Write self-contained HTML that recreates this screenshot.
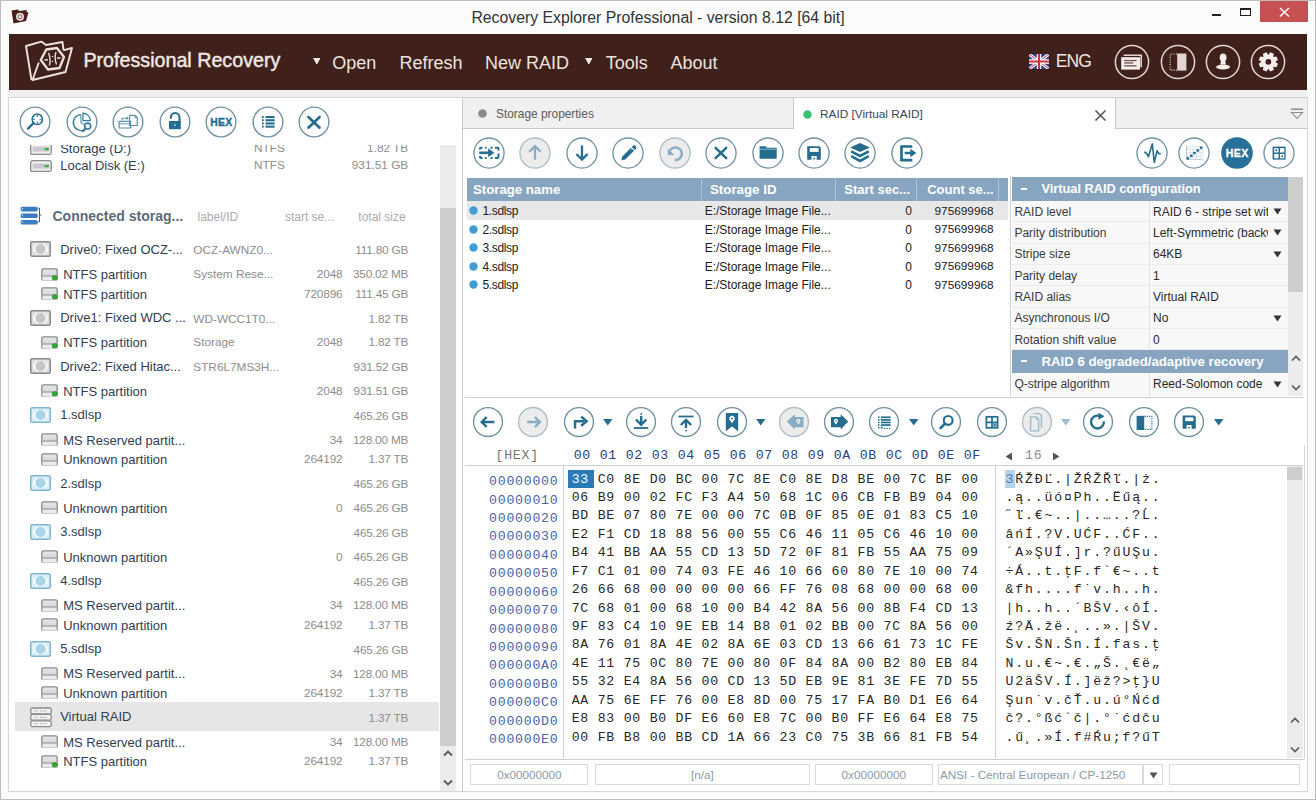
<!DOCTYPE html><html><head><meta charset="utf-8"><style>
html,body{margin:0;padding:0}
body{width:1316px;height:800px;position:relative;overflow:hidden;background:#fbfbfb;font-family:"Liberation Sans", sans-serif}
.a{position:absolute;display:block}
.t{position:absolute;white-space:pre;line-height:1}
</style></head><body>
<div class="a" style="left:0px;top:0px;width:1316px;height:800px;box-sizing:border-box;border:1px solid #bdbdbd;background:transparent"></div>
<svg class="a" style="left:10px;top:8px;" width="20" height="17" viewBox="0 0 20 17"><path d="M1.5 2.5 L8 1.5 L9 3 L17 2 L16.5 4 L18.5 4.5 L16 13 L3.5 15.5 Z" fill="#4a1f1c"/><circle cx="10" cy="8.7" r="4" fill="#e8dcdc"/><circle cx="10" cy="8.7" r="2" fill="none" stroke="#6a4a48" stroke-width="0.8"/></svg>
<div class="t" style="top:10.02px;font-size:15.8px;color:#333333;left:658px;transform:translateX(-50%);">Recovery Explorer Professional - version 8.12 [64 bit]</div>
<div class="a" style="left:1212px;top:14px;width:9px;height:2px;background:#222"></div>
<div class="a" style="left:1240px;top:8px;width:11px;height:8px;box-sizing:border-box;border:1px solid #222;border-top-width:2px"></div>
<div class="a" style="left:1260px;top:1px;width:48px;height:21px;background:#c75050"></div>
<svg class="a" style="left:1278px;top:6px;" width="12" height="12" viewBox="0 0 12 12"><path d="M2 2 L11 10.5 M11 2 L2 10.5" stroke="#fff" stroke-width="1.4"/></svg>
<div class="a" style="left:9px;top:34px;width:1298px;height:55.5px;background:#3f201b"></div>
<svg class="a" style="left:20px;top:36px;" width="60" height="50" viewBox="0 0 60 50"><g fill="none" stroke="#eee2de" stroke-width="1.9" stroke-linejoin="round"><path d="M11.5 44 L6 10 L21.3 5.6 L26 9 L42.5 6 L43.5 14"/><path d="M43.2 14.3 L52 12 L45.5 36 L12.5 44 L18.8 26.5"/><path d="M20.8 24 L26.3 13.5 L37 12 L44 21 L39.5 32 L28 33.5 Z" stroke-width="2.3"/><path d="M28.5 17 Q31 23 29.5 29.5 M36 16 Q34 22 36.5 28.5 M24.5 24 L28 23.7 M37 22.2 L40.5 21.8 M32.5 20 L32.5 21 M32.5 25 L32.5 26" stroke-width="1.4"/></g></svg>
<div class="t" style="top:51.32px;font-size:19.7px;color:#f1e7e3;left:83.4px;-webkit-text-stroke:0.45px #f1e7e3;">Professional Recovery</div>
<svg class="a" style="left:312.9px;top:57.5px;" width="7.6" height="6.8" viewBox="0 0 7.6 6.8"><path d="M0 0 L7.6 0 L3.8 6.8 Z" fill="#f1e7e3"/></svg>
<div class="t" style="top:53.66px;font-size:18px;color:#ede3df;left:332.2px;">Open</div>
<div class="t" style="top:53.66px;font-size:18px;color:#ede3df;left:399.5px;">Refresh</div>
<div class="t" style="top:53.66px;font-size:18px;color:#ede3df;left:485px;">New RAID</div>
<svg class="a" style="left:584.8px;top:57.5px;" width="7.6" height="6.8" viewBox="0 0 7.6 6.8"><path d="M0 0 L7.6 0 L3.8 6.8 Z" fill="#f1e7e3"/></svg>
<div class="t" style="top:53.66px;font-size:18px;color:#ede3df;left:605.8px;">Tools</div>
<div class="t" style="top:53.66px;font-size:18px;color:#ede3df;left:670.5px;">About</div>
<svg class="a" style="left:1029px;top:54px;" width="20" height="15" viewBox="0 0 20 15"><rect width="20" height="15" fill="#2b3f8c"/><path d="M0 0 L20 15 M20 0 L0 15" stroke="#fff" stroke-width="3"/><path d="M0 0 L20 15 M20 0 L0 15" stroke="#c8323c" stroke-width="1"/><path d="M10 0 V15 M0 7.5 H20" stroke="#fff" stroke-width="4.5"/><path d="M10 0 V15 M0 7.5 H20" stroke="#c8323c" stroke-width="2.2"/></svg>
<div class="t" style="top:52.98px;font-size:17.5px;color:#efe5e1;letter-spacing:-0.9px;left:1055.7px;">ENG</div>
<svg class="a" style="left:1114.1px;top:43.5px;" width="36" height="36" viewBox="0 0 36 36"><circle cx="18" cy="18" r="16.6" fill="none" stroke="#e3d5d1" stroke-width="1.5"/></svg>
<svg class="a" style="left:1159.5px;top:43.5px;" width="36" height="36" viewBox="0 0 36 36"><circle cx="18" cy="18" r="16.6" fill="none" stroke="#e3d5d1" stroke-width="1.5"/></svg>
<svg class="a" style="left:1204.75px;top:43.5px;" width="36" height="36" viewBox="0 0 36 36"><circle cx="18" cy="18" r="16.6" fill="none" stroke="#e3d5d1" stroke-width="1.5"/></svg>
<svg class="a" style="left:1250.4px;top:43.5px;" width="36" height="36" viewBox="0 0 36 36"><circle cx="18" cy="18" r="16.6" fill="none" stroke="#e3d5d1" stroke-width="1.5"/></svg>
<svg class="a" style="left:1114.1px;top:43.5px;" width="36" height="36" viewBox="0 0 36 36"><path d="M9.6 10.5 H28 V23.2 H26.4 V12.1 H9.6 Z" fill="#e3d5d1"/><rect x="7.2" y="13.2" width="18.8" height="12.4" fill="#f4eeec"/><g fill="#6a5450"><rect x="10.2" y="15.9" width="12.4" height="1.3"/><rect x="10.2" y="18.3" width="9" height="1.3"/><rect x="10.2" y="21.2" width="12.4" height="1.3"/></g></svg>
<svg class="a" style="left:1159.5px;top:43.5px;" width="36" height="36" viewBox="0 0 36 36"><rect x="17.2" y="9.5" width="9.2" height="17.1" fill="#e3d5d1"/><path d="M17 10 H10.2 V26.1 H17" stroke="#e3d5d1" stroke-width="1.1" stroke-dasharray="1.1 1.3" fill="none"/></svg>
<svg class="a" style="left:1204.75px;top:43.5px;" width="36" height="36" viewBox="0 0 36 36"><g fill="#f4eeec"><ellipse cx="18.1" cy="13.6" rx="3.4" ry="4.2"/><path d="M16 17 L20.2 17 L21 20.5 H15.2 Z"/><ellipse cx="18.1" cy="23" rx="6.9" ry="2.6"/></g></svg>
<svg class="a" style="left:1250.4px;top:43.5px;" width="36" height="36" viewBox="0 0 36 36"><polygon points="27.97,19.73 26.48,23.32 23.60,22.77 23.27,23.10 23.82,25.98 20.23,27.47 18.59,25.05 18.11,25.05 16.47,27.47 12.88,25.98 13.43,23.10 13.10,22.77 10.22,23.32 8.73,19.73 11.15,18.09 11.15,17.61 8.73,15.97 10.22,12.38 13.10,12.93 13.43,12.60 12.88,9.72 16.47,8.23 18.11,10.65 18.59,10.65 20.23,8.23 23.82,9.72 23.27,12.60 23.60,12.93 26.48,12.38 27.97,15.97 25.55,17.61 25.55,18.09" fill="#f4eeec"/><circle cx="18.35" cy="17.85" r="2.9" fill="#3f201b"/></svg>
<div class="a" style="left:9px;top:89.5px;width:1298px;height:8px;background:#f0f0f0"></div>
<div class="a" style="left:8px;top:97px;width:455px;height:695px;box-sizing:border-box;border:1px solid #d7d7d7;border-right:none;background:#fff"></div>
<div class="a" style="left:462px;top:97px;width:1px;height:695px;background:#c9c9c9"></div>
<svg class="a" style="left:17.200000000000003px;top:103.7px;" width="36" height="36" viewBox="0 0 36 36"><circle cx="18" cy="18" r="14.85" fill="#fff" stroke="#6f91a4" stroke-width="1.35"/><g stroke="#246d8f" fill="none"><circle cx="20.3" cy="15.3" r="5.2" stroke-width="1.5"/><path d="M16.6 19 L11 24.6" stroke-width="2.4" stroke-linecap="round"/><path d="M20.3 11 V13 M20.3 17.6 V19.6 M16 15.3 H18 M22.6 15.3 H24.6" stroke-width="1"/></g></svg>
<svg class="a" style="left:63.7px;top:103.7px;" width="36" height="36" viewBox="0 0 36 36"><circle cx="18" cy="18" r="14.85" fill="#fff" stroke="#6f91a4" stroke-width="1.35"/><g fill="none" stroke="#246d8f" opacity="0.9"><path d="M17 10.6 A8 8 0 1 0 21.2 25.6" stroke-width="1.4"/><path d="M19 9.2 V16.7 H26.3 A7.3 7.5 0 0 0 19 9.2 Z" stroke-width="1.2"/><path d="M17 11 V18.5 L20.5 21" stroke-width="1.8" opacity="0.55"/><circle cx="23.7" cy="22.1" r="3" stroke-width="1.6"/><path d="M21.6 24.3 L18.8 27.3" stroke-width="2" stroke-linecap="round"/></g></svg>
<svg class="a" style="left:110.19999999999999px;top:103.7px;" width="36" height="36" viewBox="0 0 36 36"><circle cx="18" cy="18" r="14.85" fill="#fff" stroke="#6f91a4" stroke-width="1.35"/><g fill="none" stroke="#246d8f" stroke-width="1.2" opacity="0.75"><path d="M19.6 11.3 H25 L27.3 13.6 V21.5 H19.6 Z"/><path d="M25 11.3 V13.6 H27.3" stroke-width="0.9"/><path d="M9.1 17.3 H20.6 V24 H9.1 Z"/><path d="M9.1 19.8 H20.6" stroke-width="0.9"/><path d="M12 16.5 V14.2 H17.5" stroke-width="1.1"/><path d="M16.5 12.3 L19 14.2 L16.5 16.1 Z" fill="#246d8f" stroke="none"/></g></svg>
<svg class="a" style="left:156.7px;top:103.7px;" width="36" height="36" viewBox="0 0 36 36"><circle cx="18" cy="18" r="14.85" fill="#fff" stroke="#6f91a4" stroke-width="1.35"/><g><path d="M13.9 14.8 V13.3 A4.3 4.3 0 0 1 22.5 13.3 V17.5" fill="none" stroke="#246d8f" stroke-width="2.1"/><rect x="12" y="17" width="11.8" height="8.2" fill="#246d8f"/><rect x="17.4" y="19.8" width="1.1" height="2.4" fill="#cfe0ea"/></g></svg>
<svg class="a" style="left:203.2px;top:103.7px;" width="36" height="36" viewBox="0 0 36 36"><circle cx="18" cy="18" r="14.85" fill="#fff" stroke="#6f91a4" stroke-width="1.35"/><text x="18.3" y="21.7" text-anchor="middle" font-family="Liberation Sans" font-weight="700" font-size="10.4" fill="#246d8f" stroke="#246d8f" stroke-width="0.35" letter-spacing="0.3">HEX</text></svg>
<svg class="a" style="left:249.7px;top:103.7px;" width="36" height="36" viewBox="0 0 36 36"><circle cx="18" cy="18" r="14.85" fill="#fff" stroke="#6f91a4" stroke-width="1.35"/><g fill="#246d8f"><rect x="11.9" y="12.0" width="1.8" height="2"/><rect x="15.5" y="12.0" width="9.1" height="2.1"/><rect x="11.9" y="15.2" width="1.8" height="2"/><rect x="15.5" y="15.2" width="9.1" height="2.1"/><rect x="11.9" y="18.4" width="1.8" height="2"/><rect x="15.5" y="18.4" width="9.1" height="2.1"/><rect x="11.9" y="21.6" width="1.8" height="2"/><rect x="15.5" y="21.6" width="9.1" height="2.1"/></g></svg>
<svg class="a" style="left:296.2px;top:103.7px;" width="36" height="36" viewBox="0 0 36 36"><circle cx="18" cy="18" r="14.85" fill="#fff" stroke="#6f91a4" stroke-width="1.35"/><path d="M12.4 13 L23.6 23.7 M23.6 13 L12.4 23.7" stroke="#246d8f" stroke-width="2.6" stroke-linecap="round"/></svg>
<div class="a" style="left:9px;top:144.7px;width:430px;height:646.3px;overflow:hidden">
<svg class="a" style="left:21px;top:-2.0px" width="22" height="12" viewBox="0 0 22 12"><path d="M3 0.7 H19 Q21.3 0.7 21.3 3.5 V9.8 Q21.3 11.3 19.8 11.3 H2.2 Q0.7 11.3 0.7 9.8 V3.5 Q0.7 0.7 3 0.7 Z" fill="#f0f0f0" stroke="#8c8c8c" stroke-width="1.3"/><rect x="2.8" y="3.6" width="16.6" height="5" fill="#c9c8cc"/><rect x="14.6" y="5" width="4.2" height="2.3" rx="0.8" fill="#2fb53a"/></svg>
<div class="t" style="top:-2.81px;font-size:13px;color:#2f4054;left:51.2px;">Storage (D:)</div>
<div class="t" style="top:-1.79px;font-size:11.8px;color:#8d8d8d;left:245px;">NTFS</div>
<div class="t" style="top:-1.79px;font-size:11.8px;color:#8d8d8d;right:30.80000000000001px;">1.82 TB</div>
<svg class="a" style="left:21px;top:15.5px" width="22" height="12" viewBox="0 0 22 12"><path d="M3 0.7 H19 Q21.3 0.7 21.3 3.5 V9.8 Q21.3 11.3 19.8 11.3 H2.2 Q0.7 11.3 0.7 9.8 V3.5 Q0.7 0.7 3 0.7 Z" fill="#f0f0f0" stroke="#8c8c8c" stroke-width="1.3"/><rect x="2.8" y="3.6" width="16.6" height="5" fill="#c9c8cc"/><rect x="14.6" y="5" width="4.2" height="2.3" rx="0.8" fill="#2fb53a"/></svg>
<div class="t" style="top:14.69px;font-size:13px;color:#2f4054;left:51.2px;">Local Disk (E:)</div>
<div class="t" style="top:15.71px;font-size:11.8px;color:#8d8d8d;left:245px;">NTFS</div>
<div class="t" style="top:15.71px;font-size:11.8px;color:#8d8d8d;right:30.80000000000001px;">931.51 GB</div>
<svg class="a" style="left:11px;top:61.30000000000001px" width="24" height="20" viewBox="0 0 24 20"><rect x="0.6" y="0.8" width="17.1" height="4.6" rx="1.6" fill="#3b7bc2"/><rect x="1.8" y="2.0" width="1" height="1.6" fill="#d8ecfa"/><rect x="0.6" y="7.4" width="17.1" height="4.6" rx="1.6" fill="#3b7bc2"/><rect x="1.8" y="8.6" width="1" height="1.6" fill="#d8ecfa"/><rect x="0.6" y="14.0" width="17.1" height="4.6" rx="1.6" fill="#3b7bc2"/><rect x="1.8" y="15.2" width="1" height="1.6" fill="#d8ecfa"/><path d="M18.2 2.2 H19.5 V16 H18.2 M19.5 9 H21.5" stroke="#5a5a5a" stroke-width="1" fill="none"/></svg>
<div class="t" style="top:63.95px;font-size:14px;color:#5b6b7c;font-weight:700;left:43.5px;">Connected storag...</div>
<div class="t" style="top:66.14px;font-size:12px;color:#ababab;left:188.5px;">label/ID</div>
<div class="t" style="top:66.14px;font-size:12px;color:#ababab;left:275.9px;">start se...</div>
<div class="t" style="top:66.14px;font-size:12px;color:#ababab;left:349.3px;">total size</div>
<svg class="a" style="left:21.2px;top:96.80000000000001px" width="21" height="16" viewBox="0 0 21 16"><rect x="0.75" y="0.75" width="19.5" height="14.5" rx="1.5" fill="#dcdcdc" stroke="#8a8a8a" stroke-width="1.5"/><rect x="3" y="2.8" width="15" height="10.4" fill="#f4f4f4"/><circle cx="10.5" cy="8" r="5" fill="#c6c6c6"/><g fill="#8a8a8a"><circle cx="4.2" cy="4" r="0.6"/><circle cx="16.8" cy="4" r="0.6"/><circle cx="4.2" cy="12" r="0.6"/><circle cx="16.8" cy="12" r="0.6"/></g></svg>
<div class="t" style="top:98.19px;font-size:13px;color:#2f4054;left:51.2px;">Drive0: Fixed OCZ-...</div>
<div class="t" style="top:100.81px;font-size:11.8px;color:#8d8d8d;left:184.3px;">OCZ-AWNZ0...</div>
<div class="t" style="top:100.81px;font-size:11.8px;color:#8d8d8d;right:30.80000000000001px;letter-spacing:-0.2px;">111.80 GB</div>
<svg class="a" style="left:32px;top:122.815px" width="17" height="13" viewBox="0 0 17 13"><defs><linearGradient id="pg" x1="0" y1="0" x2="0" y2="1"><stop offset="0" stop-color="#e6e8ea"/><stop offset="1" stop-color="#c9cbce"/></linearGradient></defs><path d="M2.2 0.8 H14.8 Q16.2 0.8 16.2 3 V11 Q16.2 12.2 14.8 12.2 H2.2 Q0.8 12.2 0.8 11 V3 Q0.8 0.8 2.2 0.8 Z" fill="url(#pg)" stroke="#8c8c8c" stroke-width="1.3"/><path d="M1.5 8.1 H15.5" stroke="#8a8a8a" stroke-width="1.1"/><rect x="1.5" y="8.7" width="14" height="3.9" fill="#e9eaec"/><ellipse cx="13.7" cy="9.8" rx="2.6" ry="2.3" fill="#27b22d" stroke="#1a8a1f" stroke-width="0.6"/></svg>
<div class="t" style="top:123.51px;font-size:13px;color:#2f4054;left:54.2px;">NTFS partition</div>
<div class="t" style="top:124.52px;font-size:11.8px;color:#8d8d8d;left:184.3px;">System Rese...</div>
<div class="t" style="top:124.52px;font-size:11.8px;color:#8d8d8d;right:96.5px;letter-spacing:-0.15px;">2048</div>
<div class="t" style="top:124.52px;font-size:11.8px;color:#8d8d8d;right:30.80000000000001px;letter-spacing:-0.2px;">350.02 MB</div>
<svg class="a" style="left:32px;top:142.445px" width="17" height="13" viewBox="0 0 17 13"><defs><linearGradient id="pg" x1="0" y1="0" x2="0" y2="1"><stop offset="0" stop-color="#e6e8ea"/><stop offset="1" stop-color="#c9cbce"/></linearGradient></defs><path d="M2.2 0.8 H14.8 Q16.2 0.8 16.2 3 V11 Q16.2 12.2 14.8 12.2 H2.2 Q0.8 12.2 0.8 11 V3 Q0.8 0.8 2.2 0.8 Z" fill="url(#pg)" stroke="#8c8c8c" stroke-width="1.3"/><path d="M1.5 8.1 H15.5" stroke="#8a8a8a" stroke-width="1.1"/><rect x="1.5" y="8.7" width="14" height="3.9" fill="#e9eaec"/><ellipse cx="13.7" cy="9.8" rx="2.6" ry="2.3" fill="#27b22d" stroke="#1a8a1f" stroke-width="0.6"/></svg>
<div class="t" style="top:143.14px;font-size:13px;color:#2f4054;left:54.2px;">NTFS partition</div>
<div class="t" style="top:144.15px;font-size:11.8px;color:#8d8d8d;right:96.5px;letter-spacing:-0.15px;">720896</div>
<div class="t" style="top:144.15px;font-size:11.8px;color:#8d8d8d;right:30.80000000000001px;letter-spacing:-0.2px;">111.45 GB</div>
<svg class="a" style="left:21.2px;top:165.06px" width="21" height="16" viewBox="0 0 21 16"><rect x="0.75" y="0.75" width="19.5" height="14.5" rx="1.5" fill="#dcdcdc" stroke="#8a8a8a" stroke-width="1.5"/><rect x="3" y="2.8" width="15" height="10.4" fill="#f4f4f4"/><circle cx="10.5" cy="8" r="5" fill="#c6c6c6"/><g fill="#8a8a8a"><circle cx="4.2" cy="4" r="0.6"/><circle cx="16.8" cy="4" r="0.6"/><circle cx="4.2" cy="12" r="0.6"/><circle cx="16.8" cy="12" r="0.6"/></g></svg>
<div class="t" style="top:166.45px;font-size:13px;color:#2f4054;left:51.2px;">Drive1: Fixed WDC ...</div>
<div class="t" style="top:169.07px;font-size:11.8px;color:#8d8d8d;left:184.3px;">WD-WCC1T0...</div>
<div class="t" style="top:169.07px;font-size:11.8px;color:#8d8d8d;right:30.80000000000001px;letter-spacing:-0.2px;">1.82 TB</div>
<svg class="a" style="left:32px;top:191.075px" width="17" height="13" viewBox="0 0 17 13"><defs><linearGradient id="pg" x1="0" y1="0" x2="0" y2="1"><stop offset="0" stop-color="#e6e8ea"/><stop offset="1" stop-color="#c9cbce"/></linearGradient></defs><path d="M2.2 0.8 H14.8 Q16.2 0.8 16.2 3 V11 Q16.2 12.2 14.8 12.2 H2.2 Q0.8 12.2 0.8 11 V3 Q0.8 0.8 2.2 0.8 Z" fill="url(#pg)" stroke="#8c8c8c" stroke-width="1.3"/><path d="M1.5 8.1 H15.5" stroke="#8a8a8a" stroke-width="1.1"/><rect x="1.5" y="8.7" width="14" height="3.9" fill="#e9eaec"/><ellipse cx="13.7" cy="9.8" rx="2.6" ry="2.3" fill="#27b22d" stroke="#1a8a1f" stroke-width="0.6"/></svg>
<div class="t" style="top:191.77px;font-size:13px;color:#2f4054;left:54.2px;">NTFS partition</div>
<div class="t" style="top:192.78px;font-size:11.8px;color:#8d8d8d;left:184.3px;">Storage</div>
<div class="t" style="top:192.78px;font-size:11.8px;color:#8d8d8d;right:96.5px;letter-spacing:-0.15px;">2048</div>
<div class="t" style="top:192.78px;font-size:11.8px;color:#8d8d8d;right:30.80000000000001px;letter-spacing:-0.2px;">1.82 TB</div>
<svg class="a" style="left:21.2px;top:213.69px" width="21" height="16" viewBox="0 0 21 16"><rect x="0.75" y="0.75" width="19.5" height="14.5" rx="1.5" fill="#dcdcdc" stroke="#8a8a8a" stroke-width="1.5"/><rect x="3" y="2.8" width="15" height="10.4" fill="#f4f4f4"/><circle cx="10.5" cy="8" r="5" fill="#c6c6c6"/><g fill="#8a8a8a"><circle cx="4.2" cy="4" r="0.6"/><circle cx="16.8" cy="4" r="0.6"/><circle cx="4.2" cy="12" r="0.6"/><circle cx="16.8" cy="12" r="0.6"/></g></svg>
<div class="t" style="top:215.08px;font-size:13px;color:#2f4054;left:51.2px;">Drive2: Fixed Hitac...</div>
<div class="t" style="top:217.70px;font-size:11.8px;color:#8d8d8d;left:184.3px;">STR6L7MS3H...</div>
<div class="t" style="top:217.70px;font-size:11.8px;color:#8d8d8d;right:30.80000000000001px;letter-spacing:-0.2px;">931.52 GB</div>
<svg class="a" style="left:32px;top:239.70499999999998px" width="17" height="13" viewBox="0 0 17 13"><defs><linearGradient id="pg" x1="0" y1="0" x2="0" y2="1"><stop offset="0" stop-color="#e6e8ea"/><stop offset="1" stop-color="#c9cbce"/></linearGradient></defs><path d="M2.2 0.8 H14.8 Q16.2 0.8 16.2 3 V11 Q16.2 12.2 14.8 12.2 H2.2 Q0.8 12.2 0.8 11 V3 Q0.8 0.8 2.2 0.8 Z" fill="url(#pg)" stroke="#8c8c8c" stroke-width="1.3"/><path d="M1.5 8.1 H15.5" stroke="#8a8a8a" stroke-width="1.1"/><rect x="1.5" y="8.7" width="14" height="3.9" fill="#e9eaec"/><ellipse cx="13.7" cy="9.8" rx="2.6" ry="2.3" fill="#27b22d" stroke="#1a8a1f" stroke-width="0.6"/></svg>
<div class="t" style="top:240.40px;font-size:13px;color:#2f4054;left:54.2px;">NTFS partition</div>
<div class="t" style="top:241.41px;font-size:11.8px;color:#8d8d8d;right:96.5px;letter-spacing:-0.15px;">2048</div>
<div class="t" style="top:241.41px;font-size:11.8px;color:#8d8d8d;right:30.80000000000001px;letter-spacing:-0.2px;">931.51 GB</div>
<svg class="a" style="left:21.2px;top:262.32px" width="21" height="16" viewBox="0 0 21 16"><rect x="0.75" y="0.75" width="19.5" height="14.5" rx="1.5" fill="#d9eef9" stroke="#7fb6d2" stroke-width="1.5"/><rect x="3" y="2.8" width="15" height="10.4" fill="#eef8fd"/><circle cx="10.5" cy="8" r="5" fill="#a9d5ea"/><g fill="#7fb6d2"><circle cx="4.2" cy="4" r="0.6"/><circle cx="16.8" cy="4" r="0.6"/><circle cx="4.2" cy="12" r="0.6"/><circle cx="16.8" cy="12" r="0.6"/></g></svg>
<div class="t" style="top:263.71px;font-size:13px;color:#2f4054;left:51.2px;">1.sdlsp</div>
<div class="t" style="top:266.33px;font-size:11.8px;color:#8d8d8d;right:30.80000000000001px;letter-spacing:-0.2px;">465.26 GB</div>
<svg class="a" style="left:32px;top:288.335px" width="17" height="13" viewBox="0 0 17 13"><defs><linearGradient id="pg" x1="0" y1="0" x2="0" y2="1"><stop offset="0" stop-color="#e6e8ea"/><stop offset="1" stop-color="#c9cbce"/></linearGradient></defs><path d="M2.2 0.8 H14.8 Q16.2 0.8 16.2 3 V11 Q16.2 12.2 14.8 12.2 H2.2 Q0.8 12.2 0.8 11 V3 Q0.8 0.8 2.2 0.8 Z" fill="url(#pg)" stroke="#8c8c8c" stroke-width="1.3"/><path d="M1.5 8.1 H15.5" stroke="#8a8a8a" stroke-width="1.1"/><rect x="1.5" y="8.7" width="14" height="3.9" fill="#e9eaec"/></svg>
<div class="t" style="top:289.03px;font-size:13px;color:#2f4054;left:54.2px;">MS Reserved partit...</div>
<div class="t" style="top:290.04px;font-size:11.8px;color:#8d8d8d;right:96.5px;letter-spacing:-0.15px;">34</div>
<div class="t" style="top:290.04px;font-size:11.8px;color:#8d8d8d;right:30.80000000000001px;letter-spacing:-0.2px;">128.00 MB</div>
<svg class="a" style="left:32px;top:307.965px" width="17" height="13" viewBox="0 0 17 13"><defs><linearGradient id="pg" x1="0" y1="0" x2="0" y2="1"><stop offset="0" stop-color="#e6e8ea"/><stop offset="1" stop-color="#c9cbce"/></linearGradient></defs><path d="M2.2 0.8 H14.8 Q16.2 0.8 16.2 3 V11 Q16.2 12.2 14.8 12.2 H2.2 Q0.8 12.2 0.8 11 V3 Q0.8 0.8 2.2 0.8 Z" fill="url(#pg)" stroke="#8c8c8c" stroke-width="1.3"/><path d="M1.5 8.1 H15.5" stroke="#8a8a8a" stroke-width="1.1"/><rect x="1.5" y="8.7" width="14" height="3.9" fill="#e9eaec"/></svg>
<div class="t" style="top:308.66px;font-size:13px;color:#2f4054;left:54.2px;">Unknown partition</div>
<div class="t" style="top:309.67px;font-size:11.8px;color:#8d8d8d;right:96.5px;letter-spacing:-0.15px;">264192</div>
<div class="t" style="top:309.67px;font-size:11.8px;color:#8d8d8d;right:30.80000000000001px;letter-spacing:-0.2px;">1.37 TB</div>
<svg class="a" style="left:21.2px;top:330.58px" width="21" height="16" viewBox="0 0 21 16"><rect x="0.75" y="0.75" width="19.5" height="14.5" rx="1.5" fill="#d9eef9" stroke="#7fb6d2" stroke-width="1.5"/><rect x="3" y="2.8" width="15" height="10.4" fill="#eef8fd"/><circle cx="10.5" cy="8" r="5" fill="#a9d5ea"/><g fill="#7fb6d2"><circle cx="4.2" cy="4" r="0.6"/><circle cx="16.8" cy="4" r="0.6"/><circle cx="4.2" cy="12" r="0.6"/><circle cx="16.8" cy="12" r="0.6"/></g></svg>
<div class="t" style="top:331.97px;font-size:13px;color:#2f4054;left:51.2px;">2.sdlsp</div>
<div class="t" style="top:334.59px;font-size:11.8px;color:#8d8d8d;right:30.80000000000001px;letter-spacing:-0.2px;">465.26 GB</div>
<svg class="a" style="left:32px;top:356.59499999999997px" width="17" height="13" viewBox="0 0 17 13"><defs><linearGradient id="pg" x1="0" y1="0" x2="0" y2="1"><stop offset="0" stop-color="#e6e8ea"/><stop offset="1" stop-color="#c9cbce"/></linearGradient></defs><path d="M2.2 0.8 H14.8 Q16.2 0.8 16.2 3 V11 Q16.2 12.2 14.8 12.2 H2.2 Q0.8 12.2 0.8 11 V3 Q0.8 0.8 2.2 0.8 Z" fill="url(#pg)" stroke="#8c8c8c" stroke-width="1.3"/><path d="M1.5 8.1 H15.5" stroke="#8a8a8a" stroke-width="1.1"/><rect x="1.5" y="8.7" width="14" height="3.9" fill="#e9eaec"/></svg>
<div class="t" style="top:357.29px;font-size:13px;color:#2f4054;left:54.2px;">Unknown partition</div>
<div class="t" style="top:358.30px;font-size:11.8px;color:#8d8d8d;right:96.5px;letter-spacing:-0.15px;">0</div>
<div class="t" style="top:358.30px;font-size:11.8px;color:#8d8d8d;right:30.80000000000001px;letter-spacing:-0.2px;">465.26 GB</div>
<svg class="a" style="left:21.2px;top:379.21px" width="21" height="16" viewBox="0 0 21 16"><rect x="0.75" y="0.75" width="19.5" height="14.5" rx="1.5" fill="#d9eef9" stroke="#7fb6d2" stroke-width="1.5"/><rect x="3" y="2.8" width="15" height="10.4" fill="#eef8fd"/><circle cx="10.5" cy="8" r="5" fill="#a9d5ea"/><g fill="#7fb6d2"><circle cx="4.2" cy="4" r="0.6"/><circle cx="16.8" cy="4" r="0.6"/><circle cx="4.2" cy="12" r="0.6"/><circle cx="16.8" cy="12" r="0.6"/></g></svg>
<div class="t" style="top:380.60px;font-size:13px;color:#2f4054;left:51.2px;">3.sdlsp</div>
<div class="t" style="top:383.22px;font-size:11.8px;color:#8d8d8d;right:30.80000000000001px;letter-spacing:-0.2px;">465.26 GB</div>
<svg class="a" style="left:32px;top:405.22499999999997px" width="17" height="13" viewBox="0 0 17 13"><defs><linearGradient id="pg" x1="0" y1="0" x2="0" y2="1"><stop offset="0" stop-color="#e6e8ea"/><stop offset="1" stop-color="#c9cbce"/></linearGradient></defs><path d="M2.2 0.8 H14.8 Q16.2 0.8 16.2 3 V11 Q16.2 12.2 14.8 12.2 H2.2 Q0.8 12.2 0.8 11 V3 Q0.8 0.8 2.2 0.8 Z" fill="url(#pg)" stroke="#8c8c8c" stroke-width="1.3"/><path d="M1.5 8.1 H15.5" stroke="#8a8a8a" stroke-width="1.1"/><rect x="1.5" y="8.7" width="14" height="3.9" fill="#e9eaec"/></svg>
<div class="t" style="top:405.92px;font-size:13px;color:#2f4054;left:54.2px;">Unknown partition</div>
<div class="t" style="top:406.93px;font-size:11.8px;color:#8d8d8d;right:96.5px;letter-spacing:-0.15px;">0</div>
<div class="t" style="top:406.93px;font-size:11.8px;color:#8d8d8d;right:30.80000000000001px;letter-spacing:-0.2px;">465.26 GB</div>
<svg class="a" style="left:21.2px;top:427.84px" width="21" height="16" viewBox="0 0 21 16"><rect x="0.75" y="0.75" width="19.5" height="14.5" rx="1.5" fill="#d9eef9" stroke="#7fb6d2" stroke-width="1.5"/><rect x="3" y="2.8" width="15" height="10.4" fill="#eef8fd"/><circle cx="10.5" cy="8" r="5" fill="#a9d5ea"/><g fill="#7fb6d2"><circle cx="4.2" cy="4" r="0.6"/><circle cx="16.8" cy="4" r="0.6"/><circle cx="4.2" cy="12" r="0.6"/><circle cx="16.8" cy="12" r="0.6"/></g></svg>
<div class="t" style="top:429.23px;font-size:13px;color:#2f4054;left:51.2px;">4.sdlsp</div>
<div class="t" style="top:431.85px;font-size:11.8px;color:#8d8d8d;right:30.80000000000001px;letter-spacing:-0.2px;">465.26 GB</div>
<svg class="a" style="left:32px;top:453.85499999999996px" width="17" height="13" viewBox="0 0 17 13"><defs><linearGradient id="pg" x1="0" y1="0" x2="0" y2="1"><stop offset="0" stop-color="#e6e8ea"/><stop offset="1" stop-color="#c9cbce"/></linearGradient></defs><path d="M2.2 0.8 H14.8 Q16.2 0.8 16.2 3 V11 Q16.2 12.2 14.8 12.2 H2.2 Q0.8 12.2 0.8 11 V3 Q0.8 0.8 2.2 0.8 Z" fill="url(#pg)" stroke="#8c8c8c" stroke-width="1.3"/><path d="M1.5 8.1 H15.5" stroke="#8a8a8a" stroke-width="1.1"/><rect x="1.5" y="8.7" width="14" height="3.9" fill="#e9eaec"/></svg>
<div class="t" style="top:454.55px;font-size:13px;color:#2f4054;left:54.2px;">MS Reserved partit...</div>
<div class="t" style="top:455.56px;font-size:11.8px;color:#8d8d8d;right:96.5px;letter-spacing:-0.15px;">34</div>
<div class="t" style="top:455.56px;font-size:11.8px;color:#8d8d8d;right:30.80000000000001px;letter-spacing:-0.2px;">128.00 MB</div>
<svg class="a" style="left:32px;top:473.48499999999996px" width="17" height="13" viewBox="0 0 17 13"><defs><linearGradient id="pg" x1="0" y1="0" x2="0" y2="1"><stop offset="0" stop-color="#e6e8ea"/><stop offset="1" stop-color="#c9cbce"/></linearGradient></defs><path d="M2.2 0.8 H14.8 Q16.2 0.8 16.2 3 V11 Q16.2 12.2 14.8 12.2 H2.2 Q0.8 12.2 0.8 11 V3 Q0.8 0.8 2.2 0.8 Z" fill="url(#pg)" stroke="#8c8c8c" stroke-width="1.3"/><path d="M1.5 8.1 H15.5" stroke="#8a8a8a" stroke-width="1.1"/><rect x="1.5" y="8.7" width="14" height="3.9" fill="#e9eaec"/></svg>
<div class="t" style="top:474.18px;font-size:13px;color:#2f4054;left:54.2px;">Unknown partition</div>
<div class="t" style="top:475.19px;font-size:11.8px;color:#8d8d8d;right:96.5px;letter-spacing:-0.15px;">264192</div>
<div class="t" style="top:475.19px;font-size:11.8px;color:#8d8d8d;right:30.80000000000001px;letter-spacing:-0.2px;">1.37 TB</div>
<svg class="a" style="left:21.2px;top:496.09999999999997px" width="21" height="16" viewBox="0 0 21 16"><rect x="0.75" y="0.75" width="19.5" height="14.5" rx="1.5" fill="#d9eef9" stroke="#7fb6d2" stroke-width="1.5"/><rect x="3" y="2.8" width="15" height="10.4" fill="#eef8fd"/><circle cx="10.5" cy="8" r="5" fill="#a9d5ea"/><g fill="#7fb6d2"><circle cx="4.2" cy="4" r="0.6"/><circle cx="16.8" cy="4" r="0.6"/><circle cx="4.2" cy="12" r="0.6"/><circle cx="16.8" cy="12" r="0.6"/></g></svg>
<div class="t" style="top:497.49px;font-size:13px;color:#2f4054;left:51.2px;">5.sdlsp</div>
<div class="t" style="top:500.11px;font-size:11.8px;color:#8d8d8d;right:30.80000000000001px;letter-spacing:-0.2px;">465.26 GB</div>
<svg class="a" style="left:32px;top:522.115px" width="17" height="13" viewBox="0 0 17 13"><defs><linearGradient id="pg" x1="0" y1="0" x2="0" y2="1"><stop offset="0" stop-color="#e6e8ea"/><stop offset="1" stop-color="#c9cbce"/></linearGradient></defs><path d="M2.2 0.8 H14.8 Q16.2 0.8 16.2 3 V11 Q16.2 12.2 14.8 12.2 H2.2 Q0.8 12.2 0.8 11 V3 Q0.8 0.8 2.2 0.8 Z" fill="url(#pg)" stroke="#8c8c8c" stroke-width="1.3"/><path d="M1.5 8.1 H15.5" stroke="#8a8a8a" stroke-width="1.1"/><rect x="1.5" y="8.7" width="14" height="3.9" fill="#e9eaec"/></svg>
<div class="t" style="top:522.81px;font-size:13px;color:#2f4054;left:54.2px;">MS Reserved partit...</div>
<div class="t" style="top:523.82px;font-size:11.8px;color:#8d8d8d;right:96.5px;letter-spacing:-0.15px;">34</div>
<div class="t" style="top:523.82px;font-size:11.8px;color:#8d8d8d;right:30.80000000000001px;letter-spacing:-0.2px;">128.00 MB</div>
<svg class="a" style="left:32px;top:541.7449999999999px" width="17" height="13" viewBox="0 0 17 13"><defs><linearGradient id="pg" x1="0" y1="0" x2="0" y2="1"><stop offset="0" stop-color="#e6e8ea"/><stop offset="1" stop-color="#c9cbce"/></linearGradient></defs><path d="M2.2 0.8 H14.8 Q16.2 0.8 16.2 3 V11 Q16.2 12.2 14.8 12.2 H2.2 Q0.8 12.2 0.8 11 V3 Q0.8 0.8 2.2 0.8 Z" fill="url(#pg)" stroke="#8c8c8c" stroke-width="1.3"/><path d="M1.5 8.1 H15.5" stroke="#8a8a8a" stroke-width="1.1"/><rect x="1.5" y="8.7" width="14" height="3.9" fill="#e9eaec"/></svg>
<div class="t" style="top:542.44px;font-size:13px;color:#2f4054;left:54.2px;">Unknown partition</div>
<div class="t" style="top:543.45px;font-size:11.8px;color:#8d8d8d;right:96.5px;letter-spacing:-0.15px;">264192</div>
<div class="t" style="top:543.45px;font-size:11.8px;color:#8d8d8d;right:30.80000000000001px;letter-spacing:-0.2px;">1.37 TB</div>
<div class="a" style="left:6px;top:557.76px;width:423.5px;height:29.0px;background:#e6e6e6"></div>
<svg class="a" style="left:21px;top:562.06px" width="22" height="21" viewBox="0 0 22 21"><rect x="0.75" y="1.0" width="20.5" height="5.8" rx="1.6" fill="#f2f2f2" stroke="#8c8c8c" stroke-width="1.3"/><path d="M4 3.9 H8 M10 3.9 H17" stroke="#9a9a9a" stroke-width="0.9" stroke-dasharray="1 0.6"/><rect x="0.75" y="7.4" width="20.5" height="5.8" rx="1.6" fill="#f2f2f2" stroke="#8c8c8c" stroke-width="1.3"/><path d="M4 10.3 H8 M10 10.3 H17" stroke="#9a9a9a" stroke-width="0.9" stroke-dasharray="1 0.6"/><rect x="0.75" y="13.8" width="20.5" height="5.8" rx="1.6" fill="#f2f2f2" stroke="#8c8c8c" stroke-width="1.3"/><path d="M4 16.7 H8 M10 16.7 H17" stroke="#9a9a9a" stroke-width="0.9" stroke-dasharray="1 0.6"/></svg>
<div class="t" style="top:565.75px;font-size:13px;color:#2f4054;left:51.2px;">Virtual RAID</div>
<div class="t" style="top:568.37px;font-size:11.8px;color:#8d8d8d;right:30.80000000000001px;letter-spacing:-0.2px;">1.37 TB</div>
<svg class="a" style="left:32px;top:590.375px" width="17" height="13" viewBox="0 0 17 13"><defs><linearGradient id="pg" x1="0" y1="0" x2="0" y2="1"><stop offset="0" stop-color="#e6e8ea"/><stop offset="1" stop-color="#c9cbce"/></linearGradient></defs><path d="M2.2 0.8 H14.8 Q16.2 0.8 16.2 3 V11 Q16.2 12.2 14.8 12.2 H2.2 Q0.8 12.2 0.8 11 V3 Q0.8 0.8 2.2 0.8 Z" fill="url(#pg)" stroke="#8c8c8c" stroke-width="1.3"/><path d="M1.5 8.1 H15.5" stroke="#8a8a8a" stroke-width="1.1"/><rect x="1.5" y="8.7" width="14" height="3.9" fill="#e9eaec"/></svg>
<div class="t" style="top:591.07px;font-size:13px;color:#2f4054;left:54.2px;">MS Reserved partit...</div>
<div class="t" style="top:592.08px;font-size:11.8px;color:#8d8d8d;right:96.5px;letter-spacing:-0.15px;">34</div>
<div class="t" style="top:592.08px;font-size:11.8px;color:#8d8d8d;right:30.80000000000001px;letter-spacing:-0.2px;">128.00 MB</div>
<svg class="a" style="left:32px;top:610.0049999999999px" width="17" height="13" viewBox="0 0 17 13"><defs><linearGradient id="pg" x1="0" y1="0" x2="0" y2="1"><stop offset="0" stop-color="#e6e8ea"/><stop offset="1" stop-color="#c9cbce"/></linearGradient></defs><path d="M2.2 0.8 H14.8 Q16.2 0.8 16.2 3 V11 Q16.2 12.2 14.8 12.2 H2.2 Q0.8 12.2 0.8 11 V3 Q0.8 0.8 2.2 0.8 Z" fill="url(#pg)" stroke="#8c8c8c" stroke-width="1.3"/><path d="M1.5 8.1 H15.5" stroke="#8a8a8a" stroke-width="1.1"/><rect x="1.5" y="8.7" width="14" height="3.9" fill="#e9eaec"/><ellipse cx="13.7" cy="9.8" rx="2.6" ry="2.3" fill="#27b22d" stroke="#1a8a1f" stroke-width="0.6"/></svg>
<div class="t" style="top:610.70px;font-size:13px;color:#2f4054;left:54.2px;">NTFS partition</div>
<div class="t" style="top:611.71px;font-size:11.8px;color:#8d8d8d;right:96.5px;letter-spacing:-0.15px;">264192</div>
<div class="t" style="top:611.71px;font-size:11.8px;color:#8d8d8d;right:30.80000000000001px;letter-spacing:-0.2px;">1.37 TB</div>
</div>
<div class="a" style="left:439.5px;top:145px;width:16px;height:645.5px;background:#ececee"></div>
<div class="a" style="left:439.5px;top:208px;width:16px;height:537.6px;background:#cdcdcd"></div>
<svg class="a" style="left:441.5px;top:749px;" width="12" height="9" viewBox="0 0 12 9"><path d="M2 6.5 L6 2.5 L10 6.5" stroke="#5a5a5a" stroke-width="1.8" fill="none"/></svg>
<svg class="a" style="left:441.5px;top:778px;" width="12" height="9" viewBox="0 0 12 9"><path d="M2 2.5 L6 6.5 L10 2.5" stroke="#5a5a5a" stroke-width="1.8" fill="none"/></svg>
<div class="a" style="left:463px;top:97px;width:845px;height:695px;box-sizing:border-box;border:1px solid #d7d7d7;border-left:none;background:#fff"></div>
<div class="a" style="left:463px;top:98px;width:844px;height:30.5px;background:#f0f0f0"></div>
<div class="a" style="left:463px;top:128px;width:330px;height:1px;background:#c8c8c8"></div>
<div class="a" style="left:1116px;top:128px;width:191px;height:1px;background:#c8c8c8"></div>
<div class="a" style="left:463px;top:97px;width:845px;height:1px;background:#cfcfcf"></div>
<div class="a" style="left:793px;top:98px;width:323px;height:31px;background:#fff;box-sizing:border-box;border-left:1px solid #c8c8c8;border-right:1px solid #c8c8c8"></div>
<svg class="a" style="left:478px;top:109px;" width="9" height="9" viewBox="0 0 9 9"><circle cx="4.5" cy="4.5" r="4.3" fill="#8a8a8a"/></svg>
<div class="t" style="top:108.72px;font-size:11.9px;color:#5b5b5b;left:496px;">Storage properties</div>
<svg class="a" style="left:802.5px;top:110px;" width="9" height="9" viewBox="0 0 9 9"><circle cx="4.5" cy="4.5" r="4.2" fill="#37c172"/></svg>
<div class="t" style="top:108.81px;font-size:11.8px;color:#384858;left:820px;">RAID [Virtual RAID]</div>
<svg class="a" style="left:1094px;top:108.5px;" width="13" height="13" viewBox="0 0 13 13"><path d="M1.5 1.5 L11.5 11.5 M11.5 1.5 L1.5 11.5" stroke="#555" stroke-width="1.6"/></svg>
<svg class="a" style="left:1289.5px;top:108px;" width="14" height="12" viewBox="0 0 14 12"><path d="M1 1.2 H13" stroke="#8a8a8a" stroke-width="1.5"/><path d="M1.5 4.5 H12.5 L7 10.5 Z" fill="none" stroke="#8a8a8a" stroke-width="1.1"/></svg>
<svg class="a" style="left:470.8px;top:134.9px;" width="36" height="36" viewBox="0 0 36 36"><circle cx="18" cy="18" r="15.05" fill="#fff" stroke="#6f91a4" stroke-width="1.35"/><g><path d="M9 14.5 V13.6 Q9 12.7 10 12.7 H11.5 M14 12.7 H15.5 M19.5 12.7 H21.5 M24 12.7 H26.5 Q27.5 12.7 27.5 13.7 V15.5 M27.5 18.5 V21.5 Q27.5 22.9 26.5 22.9 H24 M21.5 22.9 H19.5 M15.5 22.9 H14 M11.5 22.9 H10 Q9 22.9 9 21.9 V21" fill="none" stroke="#246d8f" stroke-width="2"/><path d="M8.3 17.8 H18.5" stroke="#246d8f" stroke-width="2.6"/><path d="M17.2 13.3 L23.3 17.8 L17.2 22.3 Z" fill="#246d8f"/></g></svg>
<svg class="a" style="left:517.25px;top:134.9px;" width="36" height="36" viewBox="0 0 36 36"><circle cx="18" cy="18" r="15.05" fill="#ececec" stroke="#aebfc8" stroke-width="1.4"/><path d="M18 24.8 V11.5 M12.4 16.8 L18 11.2 L23.6 16.8" stroke="#86adc1" stroke-width="2.3" fill="none"/></svg>
<svg class="a" style="left:563.7px;top:134.9px;" width="36" height="36" viewBox="0 0 36 36"><circle cx="18" cy="18" r="15.05" fill="#fff" stroke="#6f91a4" stroke-width="1.35"/><path d="M18 10.5 V24.5 M12.4 19 L18 24.6 L23.6 19" stroke="#246d8f" stroke-width="2.3" fill="none"/></svg>
<svg class="a" style="left:610.1500000000001px;top:134.9px;" width="36" height="36" viewBox="0 0 36 36"><circle cx="18" cy="18" r="15.05" fill="#fff" stroke="#6f91a4" stroke-width="1.35"/><g fill="#246d8f"><path d="M11.3 25.2 L12.3 21.4 L21 12.7 L24 15.7 L15.3 24.4 Z"/><path d="M21.8 11.9 L23.1 10.6 Q24 9.8 24.9 10.6 L26.1 11.8 Q26.9 12.7 26.1 13.6 L24.8 14.9 Z"/></g><path d="M20.7 14.8 L22 13.5" stroke="#fff" stroke-width="0.7"/></svg>
<svg class="a" style="left:656.6px;top:134.9px;" width="36" height="36" viewBox="0 0 36 36"><circle cx="18" cy="18" r="15.05" fill="#ececec" stroke="#aebfc8" stroke-width="1.4"/><path d="M13.3 15.2 A6.3 6.3 0 1 1 17.8 25" stroke="#86adc1" stroke-width="2.5" fill="none"/><path d="M10.9 13.2 L10.9 20 L17.2 20 Z" fill="#86adc1"/></svg>
<svg class="a" style="left:703.05px;top:134.9px;" width="36" height="36" viewBox="0 0 36 36"><circle cx="18" cy="18" r="15.05" fill="#fff" stroke="#6f91a4" stroke-width="1.35"/><path d="M12.6 12.8 L23.2 23.2 M23.2 12.8 L12.6 23.2" stroke="#246d8f" stroke-width="2.5" stroke-linecap="round"/></svg>
<svg class="a" style="left:749.5px;top:134.9px;" width="36" height="36" viewBox="0 0 36 36"><circle cx="18" cy="18" r="15.05" fill="#fff" stroke="#6f91a4" stroke-width="1.35"/><path d="M9.6 11.2 H15.5 L17 12.8 H26.7 V23.7 H9.6 Z" fill="#246d8f"/><path d="M10 14.2 H26.4" stroke="#9cc4d8" stroke-width="0.9"/></svg>
<svg class="a" style="left:795.95px;top:134.9px;" width="36" height="36" viewBox="0 0 36 36"><circle cx="18" cy="18" r="15.05" fill="#fff" stroke="#6f91a4" stroke-width="1.35"/><path d="M11.2 11.2 H23.5 L24.8 12.5 V24.8 H11.2 Z" fill="#246d8f"/><rect x="13.8" y="13" width="8.8" height="3.9" fill="#fff"/><rect x="15.4" y="21" width="5.3" height="3.8" fill="#fff"/><rect x="17.3" y="22.8" width="1.6" height="1.4" fill="#246d8f"/></svg>
<svg class="a" style="left:842.4000000000001px;top:134.9px;" width="36" height="36" viewBox="0 0 36 36"><circle cx="18" cy="18" r="15.05" fill="#fff" stroke="#6f91a4" stroke-width="1.35"/><path d="M18 8 L27.9 12.5 L18 17 L8.1 12.5 Z" fill="#246d8f"/><path d="M9.2 16.3 L18 21 L26.8 16.3" stroke="#246d8f" stroke-width="2.6" fill="none"/><path d="M9.2 21.2 L18 26 L26.8 21.2" stroke="#246d8f" stroke-width="2.6" fill="none"/></svg>
<svg class="a" style="left:888.85px;top:134.9px;" width="36" height="36" viewBox="0 0 36 36"><circle cx="18" cy="18" r="15.05" fill="#fff" stroke="#6f91a4" stroke-width="1.35"/><path d="M23.3 11.5 H12.5 V25.1 H23.3" stroke="#246d8f" stroke-width="2.7" fill="none"/><path d="M15.7 18 H22" stroke="#246d8f" stroke-width="2.5"/><path d="M21.3 13.8 L27.4 18 L21.3 22.2 Z" fill="#246d8f"/></svg>
<svg class="a" style="left:1134.1px;top:134.9px;" width="36" height="36" viewBox="0 0 36 36"><circle cx="18" cy="18" r="15.05" fill="#fff" stroke="#6f91a4" stroke-width="1.35"/><path d="M10.2 17.4 Q12.5 17 14.4 21.7 L18.3 8.9 L20.3 27.4 L23.1 15.8 L24.8 18.6 H26.7" stroke="#246d8f" stroke-width="1.6" fill="none" stroke-linejoin="round"/></svg>
<svg class="a" style="left:1176.3999999999999px;top:134.9px;" width="36" height="36" viewBox="0 0 36 36"><circle cx="18" cy="18" r="15.05" fill="#fff" stroke="#6f91a4" stroke-width="1.35"/><g><path d="M10.6 11.3 V24.3 H26.8" fill="none" stroke="#246d8f" stroke-width="0.9" stroke-dasharray="0.9 0.9" opacity="0.8"/><path d="M10.6 11.3 H26.8 V24.3 M14 11.5 V24 M17.4 11.5 V24 M20.8 11.5 V24 M24.2 11.5 V24 M10.8 14.6 H26.6 M10.8 17.9 H26.6 M10.8 21.2 H26.6" stroke="#246d8f" stroke-width="0.6" stroke-dasharray="0.8 1" opacity="0.55" fill="none"/><rect x="10.6" y="22.2" width="2.6" height="2.4" fill="#246d8f"/><rect x="14.0" y="19.6" width="2.6" height="2.4" fill="#246d8f"/><rect x="17.1" y="16.8" width="2.6" height="2.4" fill="#246d8f"/><rect x="20.5" y="14.3" width="2.6" height="2.4" fill="#246d8f"/><rect x="23.8" y="11.5" width="2.6" height="2.4" fill="#246d8f"/></g></svg>
<svg class="a" style="left:1218.6999999999998px;top:134.9px;" width="36" height="36" viewBox="0 0 36 36"><circle cx="18" cy="18" r="15.8" fill="#27709a"/><text x="18.2" y="21.8" text-anchor="middle" font-family="Liberation Sans" font-weight="700" font-size="10.6" fill="#fff" stroke="#fff" stroke-width="0.3" letter-spacing="0.3">HEX</text></svg>
<svg class="a" style="left:1261.0px;top:134.9px;" width="36" height="36" viewBox="0 0 36 36"><circle cx="18" cy="18" r="15.05" fill="#fff" stroke="#6f91a4" stroke-width="1.35"/><g><rect x="11.6" y="11.6" width="13" height="13" fill="#246d8f"/><rect x="13.2" y="13.2" width="4.3" height="4.3" fill="#fff"/><rect x="19" y="13.2" width="4.3" height="4.3" fill="#fff"/><rect x="13.2" y="19" width="4.3" height="4.3" fill="#fff"/><rect x="19" y="19" width="4.3" height="4.3" fill="#fff"/><circle cx="15.3" cy="15.3" r="1" fill="#246d8f"/><circle cx="21.2" cy="21.2" r="1" fill="#246d8f"/></g></svg>
<div class="a" style="left:466.5px;top:177.5px;width:541px;height:23.5px;background:#87a5c1"></div>
<div class="a" style="left:701.4px;top:177.5px;width:1px;height:23.5px;background:#aec3d6"></div>
<div class="a" style="left:835.2px;top:177.5px;width:1px;height:23.5px;background:#aec3d6"></div>
<div class="a" style="left:916.4px;top:177.5px;width:1px;height:23.5px;background:#aec3d6"></div>
<div class="a" style="left:997.5px;top:177.5px;width:1px;height:23.5px;background:#aec3d6"></div>
<div class="t" style="top:182.82px;font-size:13.2px;color:#fff;font-weight:700;left:473px;">Storage name</div>
<div class="t" style="top:182.74px;font-size:13.3px;color:#fff;font-weight:700;left:710px;">Storage ID</div>
<div class="t" style="top:182.99px;font-size:13px;color:#fff;font-weight:700;left:844.3px;">Start sec...</div>
<div class="t" style="top:182.99px;font-size:13px;color:#fff;font-weight:700;left:927.2px;">Count se...</div>
<div class="a" style="left:466.5px;top:201px;width:541px;height:18.5px;background:#e8e8e8"></div>
<svg class="a" style="left:468.8px;top:206.0px;" width="9" height="9" viewBox="0 0 9 9"><circle cx="4.5" cy="4.5" r="4.2" fill="#3d9fd6"/></svg>
<div class="t" style="top:205.34px;font-size:12px;color:#202020;letter-spacing:-0.35px;left:482.5px;">1.sdlsp</div>
<div class="t" style="top:205.34px;font-size:12px;color:#202020;left:704.7px;">E:/Storage Image File...</div>
<div class="t" style="top:205.34px;font-size:12px;color:#202020;right:404px;">0</div>
<div class="t" style="top:205.51px;font-size:11.8px;color:#202020;right:322.4px;">975699968</div>
<svg class="a" style="left:468.8px;top:224.5px;" width="9" height="9" viewBox="0 0 9 9"><circle cx="4.5" cy="4.5" r="4.2" fill="#3d9fd6"/></svg>
<div class="t" style="top:223.84px;font-size:12px;color:#202020;letter-spacing:-0.35px;left:482.5px;">2.sdlsp</div>
<div class="t" style="top:223.84px;font-size:12px;color:#202020;left:704.7px;">E:/Storage Image File...</div>
<div class="t" style="top:223.84px;font-size:12px;color:#202020;right:404px;">0</div>
<div class="t" style="top:224.01px;font-size:11.8px;color:#202020;right:322.4px;">975699968</div>
<svg class="a" style="left:468.8px;top:243.0px;" width="9" height="9" viewBox="0 0 9 9"><circle cx="4.5" cy="4.5" r="4.2" fill="#3d9fd6"/></svg>
<div class="t" style="top:242.34px;font-size:12px;color:#202020;letter-spacing:-0.35px;left:482.5px;">3.sdlsp</div>
<div class="t" style="top:242.34px;font-size:12px;color:#202020;left:704.7px;">E:/Storage Image File...</div>
<div class="t" style="top:242.34px;font-size:12px;color:#202020;right:404px;">0</div>
<div class="t" style="top:242.51px;font-size:11.8px;color:#202020;right:322.4px;">975699968</div>
<svg class="a" style="left:468.8px;top:261.5px;" width="9" height="9" viewBox="0 0 9 9"><circle cx="4.5" cy="4.5" r="4.2" fill="#3d9fd6"/></svg>
<div class="t" style="top:260.84px;font-size:12px;color:#202020;letter-spacing:-0.35px;left:482.5px;">4.sdlsp</div>
<div class="t" style="top:260.84px;font-size:12px;color:#202020;left:704.7px;">E:/Storage Image File...</div>
<div class="t" style="top:260.84px;font-size:12px;color:#202020;right:404px;">0</div>
<div class="t" style="top:261.01px;font-size:11.8px;color:#202020;right:322.4px;">975699968</div>
<svg class="a" style="left:468.8px;top:280.0px;" width="9" height="9" viewBox="0 0 9 9"><circle cx="4.5" cy="4.5" r="4.2" fill="#3d9fd6"/></svg>
<div class="t" style="top:279.34px;font-size:12px;color:#202020;letter-spacing:-0.35px;left:482.5px;">5.sdlsp</div>
<div class="t" style="top:279.34px;font-size:12px;color:#202020;left:704.7px;">E:/Storage Image File...</div>
<div class="t" style="top:279.34px;font-size:12px;color:#202020;right:404px;">0</div>
<div class="t" style="top:279.51px;font-size:11.8px;color:#202020;right:322.4px;">975699968</div>
<div class="a" style="left:1010.3px;top:176.8px;width:1px;height:219px;background:#d0d0d0"></div>
<div class="a" style="left:1012px;top:177px;width:276.4px;height:24px;background:#87a5c1"></div>
<div class="a" style="left:1020.5px;top:188.2px;width:6.3px;height:2px;background:#fff"></div>
<div class="t" style="top:183.00px;font-size:12.75px;color:#fff;font-weight:700;left:1041.5px;">Virtual RAID configuration</div>
<div class="a" style="left:1012px;top:201px;width:276.4px;height:149.31px;background:#f8f8f8"></div>
<div class="a" style="left:1012px;top:221.32999999999998px;width:276.4px;height:1px;background:#ececec"></div>
<div class="t" style="top:205.80px;font-size:12px;color:#3a3a3a;left:1014.4px;">RAID level</div>
<div class="t" style="top:205.80px;font-size:12px;color:#2a2a2a;left:1153px;width:115px;overflow:hidden;">RAID 6 - stripe set wit</div>
<svg class="a" style="left:1273px;top:208.165px;" width="9" height="7" viewBox="0 0 9 7"><path d="M0.5 0.5 H8.5 L4.5 6.5 Z" fill="#333"/></svg>
<div class="a" style="left:1012px;top:242.65999999999997px;width:276.4px;height:1px;background:#ececec"></div>
<div class="t" style="top:227.13px;font-size:12px;color:#3a3a3a;left:1014.4px;">Parity distribution</div>
<div class="t" style="top:227.13px;font-size:12px;color:#2a2a2a;left:1153px;width:115px;overflow:hidden;">Left-Symmetric (backw</div>
<svg class="a" style="left:1273px;top:229.49499999999998px;" width="9" height="7" viewBox="0 0 9 7"><path d="M0.5 0.5 H8.5 L4.5 6.5 Z" fill="#333"/></svg>
<div class="a" style="left:1012px;top:263.99px;width:276.4px;height:1px;background:#ececec"></div>
<div class="t" style="top:248.46px;font-size:12px;color:#3a3a3a;left:1014.4px;">Stripe size</div>
<div class="t" style="top:248.46px;font-size:12px;color:#2a2a2a;left:1153px;width:115px;overflow:hidden;">64KB</div>
<svg class="a" style="left:1273px;top:250.825px;" width="9" height="7" viewBox="0 0 9 7"><path d="M0.5 0.5 H8.5 L4.5 6.5 Z" fill="#333"/></svg>
<div class="a" style="left:1012px;top:285.32px;width:276.4px;height:1px;background:#ececec"></div>
<div class="t" style="top:269.79px;font-size:12px;color:#3a3a3a;left:1014.4px;">Parity delay</div>
<div class="t" style="top:269.79px;font-size:12px;color:#2a2a2a;left:1153px;width:115px;overflow:hidden;">1</div>
<div class="a" style="left:1012px;top:306.65px;width:276.4px;height:1px;background:#ececec"></div>
<div class="t" style="top:291.12px;font-size:12px;color:#3a3a3a;left:1014.4px;">RAID alias</div>
<div class="t" style="top:291.12px;font-size:12px;color:#2a2a2a;left:1153px;width:115px;overflow:hidden;">Virtual RAID</div>
<div class="a" style="left:1012px;top:327.97999999999996px;width:276.4px;height:1px;background:#ececec"></div>
<div class="t" style="top:312.45px;font-size:12px;color:#3a3a3a;left:1014.4px;">Asynchronous I/O</div>
<div class="t" style="top:312.45px;font-size:12px;color:#2a2a2a;left:1153px;width:115px;overflow:hidden;">No</div>
<svg class="a" style="left:1273px;top:314.815px;" width="9" height="7" viewBox="0 0 9 7"><path d="M0.5 0.5 H8.5 L4.5 6.5 Z" fill="#333"/></svg>
<div class="a" style="left:1012px;top:349.31px;width:276.4px;height:1px;background:#ececec"></div>
<div class="t" style="top:333.78px;font-size:12px;color:#3a3a3a;left:1014.4px;">Rotation shift value</div>
<div class="t" style="top:333.78px;font-size:12px;color:#2a2a2a;left:1153px;width:115px;overflow:hidden;">0</div>
<div class="a" style="left:1149.3px;top:201px;width:1px;height:149.31px;background:#e2e2e2"></div>
<div class="a" style="left:1012px;top:350.3px;width:276.4px;height:22.5px;background:#87a5c1"></div>
<div class="a" style="left:1020.5px;top:360.2px;width:6.3px;height:2px;background:#fff"></div>
<div class="t" style="top:354.82px;font-size:13.2px;color:#fff;font-weight:700;left:1041.5px;">RAID 6 degraded/adaptive recovery</div>
<div class="a" style="left:1012px;top:372.8px;width:276.4px;height:23px;background:#f8f8f8"></div>
<div class="a" style="left:1149.3px;top:372.8px;width:1px;height:23px;background:#e2e2e2"></div>
<div class="t" style="top:378.34px;font-size:12px;color:#3a3a3a;left:1014.4px;">Q-stripe algorithm</div>
<div class="t" style="top:378.34px;font-size:12px;color:#2a2a2a;left:1153px;">Reed-Solomon code</div>
<svg class="a" style="left:1273px;top:381px;" width="9" height="7" viewBox="0 0 9 7"><path d="M0.5 0.5 H8.5 L4.5 6.5 Z" fill="#333"/></svg>
<div class="a" style="left:1288.4px;top:177px;width:15px;height:219px;background:#ececee"></div>
<div class="a" style="left:1288.4px;top:177px;width:15px;height:115px;background:#cdcdcd"></div>
<svg class="a" style="left:1290px;top:353.5px;" width="12" height="9" viewBox="0 0 12 9"><path d="M2 6.5 L6 2.5 L10 6.5" stroke="#5a5a5a" stroke-width="1.7" fill="none"/></svg>
<svg class="a" style="left:1290px;top:383px;" width="12" height="9" viewBox="0 0 12 9"><path d="M2 2.5 L6 6.5 L10 2.5" stroke="#5a5a5a" stroke-width="1.7" fill="none"/></svg>
<div class="a" style="left:465.3px;top:397px;width:839px;height:1px;background:#cdcdcd"></div>
<svg class="a" style="left:469.8px;top:403.9px;" width="36" height="36" viewBox="0 0 36 36"><circle cx="18" cy="18" r="14.45" fill="#fff" stroke="#6f91a4" stroke-width="1.35"/><path d="M24.4 18 H12.5 M16.7 13 L11.7 18 L16.7 23" stroke="#246d8f" stroke-width="2.4" fill="none"/></svg>
<svg class="a" style="left:515.4000000000001px;top:403.9px;" width="36" height="36" viewBox="0 0 36 36"><circle cx="18" cy="18" r="14.45" fill="#ececec" stroke="#aebfc8" stroke-width="1.4"/><path d="M12.1 18 H24 M19.9 13 L24.9 18 L19.9 23" stroke="#86adc1" stroke-width="2.4" fill="none"/></svg>
<svg class="a" style="left:561.0px;top:403.9px;" width="36" height="36" viewBox="0 0 36 36"><circle cx="18" cy="18" r="14.45" fill="#fff" stroke="#6f91a4" stroke-width="1.35"/><path d="M14 24.4 V17.2 H23" stroke="#246d8f" stroke-width="2.5" fill="none"/><path d="M20.2 12.6 L25.6 17.2 L20.2 21.8" stroke="#246d8f" stroke-width="2.5" fill="none"/></svg>
<svg class="a" style="left:622.6px;top:403.9px;" width="36" height="36" viewBox="0 0 36 36"><circle cx="18" cy="18" r="14.45" fill="#fff" stroke="#6f91a4" stroke-width="1.35"/><path d="M18.2 12 V19.5 M13 15.5 L18.2 20.7 L23.4 15.5" stroke="#246d8f" stroke-width="2.4" fill="none"/><path d="M10.8 24 H25.2" stroke="#246d8f" stroke-width="1.8"/><circle cx="18.2" cy="9.9" r="0.9" fill="#246d8f"/></svg>
<svg class="a" style="left:668.1px;top:403.9px;" width="36" height="36" viewBox="0 0 36 36"><circle cx="18" cy="18" r="14.45" fill="#fff" stroke="#6f91a4" stroke-width="1.35"/><path d="M10.4 12.5 H25.6" stroke="#246d8f" stroke-width="1.8"/><path d="M18 24 V17 M12.8 21 L18 15.9 L23.2 21" stroke="#246d8f" stroke-width="2.4" fill="none"/><circle cx="18" cy="26.6" r="0.9" fill="#246d8f"/></svg>
<svg class="a" style="left:713.5px;top:403.9px;" width="36" height="36" viewBox="0 0 36 36"><circle cx="18" cy="18" r="14.45" fill="#fff" stroke="#6f91a4" stroke-width="1.35"/><path d="M11.8 9 H24.2 V27.2 L18 22.5 L11.8 27.2 Z" fill="#246d8f"/><path d="M18 19.3 L15.6 15.8 A2.7 2.7 0 1 1 20.4 15.8 Z" fill="#fff"/><circle cx="18" cy="14.6" r="1" fill="#246d8f"/></svg>
<svg class="a" style="left:775.5px;top:403.9px;" width="36" height="36" viewBox="0 0 36 36"><circle cx="18" cy="18" r="14.45" fill="#ececec" stroke="#aebfc8" stroke-width="1.4"/><path d="M10.8 17.6 L18.8 10.3 V12.9 H27.5 V23.2 H18.8 V25.5 Z" fill="#86adc1"/><path d="M22.4 20.5 L20.6 18 A2.1 2.1 0 1 1 24.2 18 Z" fill="#ebebeb"/><circle cx="22.4" cy="17" r="0.7" fill="#86adc1"/></svg>
<svg class="a" style="left:820.5px;top:403.9px;" width="36" height="36" viewBox="0 0 36 36"><circle cx="18" cy="18" r="14.45" fill="#fff" stroke="#6f91a4" stroke-width="1.35"/><path d="M10 12.9 H19.7 V10.3 L27.2 17.6 L19.7 25.5 V23.2 H10 Z" fill="#246d8f"/><path d="M14.9 20.5 L13.1 18 A2.1 2.1 0 1 1 16.7 18 Z" fill="#fff"/><circle cx="14.9" cy="17" r="0.7" fill="#246d8f"/></svg>
<svg class="a" style="left:866.0px;top:403.9px;" width="36" height="36" viewBox="0 0 36 36"><circle cx="18" cy="18" r="14.45" fill="#fff" stroke="#6f91a4" stroke-width="1.35"/><g fill="#246d8f"><rect x="12" y="12.4" width="1.5" height="1.6"/><rect x="14.8" y="12.4" width="9.8" height="1.7"/><rect x="12" y="15.0" width="1.5" height="1.6"/><rect x="14.8" y="15.0" width="9.8" height="1.7"/><rect x="12" y="17.6" width="1.5" height="1.6"/><rect x="14.8" y="17.6" width="9.8" height="1.7"/><rect x="12" y="20.2" width="1.5" height="1.6"/><rect x="14.8" y="20.2" width="9.8" height="1.7"/><rect x="12" y="22.8" width="1.5" height="1.6"/><rect x="14.8" y="22.8" width="2" height="1.7"/><rect x="17.8" y="23.8" width="1.3" height="1.3"/><rect x="20.3" y="23.8" width="1.3" height="1.3"/><rect x="22.8" y="23.8" width="1.3" height="1.3"/></g></svg>
<svg class="a" style="left:928.0px;top:403.9px;" width="36" height="36" viewBox="0 0 36 36"><circle cx="18" cy="18" r="14.45" fill="#fff" stroke="#6f91a4" stroke-width="1.35"/><circle cx="20.2" cy="16.4" r="4.4" fill="none" stroke="#246d8f" stroke-width="2.2"/><path d="M17 19.6 L12.6 24" stroke="#246d8f" stroke-width="2.6" stroke-linecap="round"/></svg>
<svg class="a" style="left:973.5px;top:403.9px;" width="36" height="36" viewBox="0 0 36 36"><circle cx="18" cy="18" r="14.45" fill="#fff" stroke="#6f91a4" stroke-width="1.35"/><g fill="none" stroke="#246d8f" stroke-width="1.7"><rect x="12.4" y="12.8" width="11.2" height="11"/><path d="M18 12.8 V23.8 M12.4 18.3 H23.6"/></g><rect x="18.8" y="19.1" width="4" height="3.9" fill="#246d8f" opacity="0.45"/><circle cx="20.8" cy="21" r="1.1" fill="#246d8f"/></svg>
<svg class="a" style="left:1018.8px;top:403.9px;" width="36" height="36" viewBox="0 0 36 36"><circle cx="18" cy="18" r="14.45" fill="#ececec" stroke="#aebfc8" stroke-width="1.4"/><g fill="none" stroke="#9dbdcc" stroke-width="1.4"><path d="M14.7 9.6 H20.5 L22.4 11.5 V23.6"/><path d="M11.6 12.9 H17.3 L19.6 15.2 V26.9 H11.6 Z"/><path d="M17.3 12.9 V15.2 H19.6" stroke-width="1"/></g></svg>
<svg class="a" style="left:1080.0px;top:403.9px;" width="36" height="36" viewBox="0 0 36 36"><circle cx="18" cy="18" r="14.45" fill="#fff" stroke="#6f91a4" stroke-width="1.35"/><path d="M23.8 17.3 A6.4 6.4 0 1 1 19.5 12" stroke="#246d8f" stroke-width="2.4" fill="none"/><path d="M18.5 8.8 L24.5 12.2 L18.5 15.8 Z" fill="#246d8f"/></svg>
<svg class="a" style="left:1125.7px;top:403.9px;" width="36" height="36" viewBox="0 0 36 36"><circle cx="18" cy="18" r="14.45" fill="#fff" stroke="#6f91a4" stroke-width="1.35"/><rect x="10.6" y="11.8" width="7.6" height="14.2" fill="#246d8f"/><path d="M18.2 12.4 H25.9 V25.4 H18.2" stroke="#246d8f" stroke-width="1.1" stroke-dasharray="1.3 1.1" fill="none"/></svg>
<svg class="a" style="left:1171.2px;top:403.9px;" width="36" height="36" viewBox="0 0 36 36"><circle cx="18" cy="18" r="14.45" fill="#fff" stroke="#6f91a4" stroke-width="1.35"/><path d="M11.6 11.6 H23.4 L24.8 13 V24.8 H11.6 Z" fill="#246d8f"/><rect x="14.2" y="13.4" width="8.2" height="3.8" fill="#fff"/><rect x="15.6" y="21" width="5" height="3.8" fill="#fff"/><rect x="17.4" y="22.8" width="1.5" height="1.4" fill="#246d8f"/></svg>
<svg class="a" style="left:603px;top:418.9px;" width="10" height="7" viewBox="0 0 10 7"><path d="M0 0 H9.5 L4.75 6.4 Z" fill="#2b6d8f"/></svg>
<svg class="a" style="left:755.6px;top:418.9px;" width="10" height="7" viewBox="0 0 10 7"><path d="M0 0 H9.5 L4.75 6.4 Z" fill="#2b6d8f"/></svg>
<svg class="a" style="left:908.6px;top:418.9px;" width="10" height="7" viewBox="0 0 10 7"><path d="M0 0 H9.5 L4.75 6.4 Z" fill="#2b6d8f"/></svg>
<svg class="a" style="left:1060.5px;top:418.9px;" width="10" height="7" viewBox="0 0 10 7"><path d="M0 0 H9.5 L4.75 6.4 Z" fill="#9dbccc"/></svg>
<svg class="a" style="left:1213.5px;top:418.9px;" width="10" height="7" viewBox="0 0 10 7"><path d="M0 0 H9.5 L4.75 6.4 Z" fill="#2b6d8f"/></svg>
<div class="t" style="top:449.39px;font-size:13.2px;color:#79746d;font-family:'Liberation Mono', monospace;letter-spacing:0.747px;left:495.5px;">[HEX]</div>
<div class="t" style="top:449.39px;font-size:13.2px;color:#2a3f80;font-family:'Liberation Mono', monospace;letter-spacing:0.747px;left:573.7px;">00</div>
<div class="t" style="top:449.39px;font-size:13.2px;color:#2a3f80;font-family:'Liberation Mono', monospace;letter-spacing:0.747px;left:599.7px;">01</div>
<div class="t" style="top:449.39px;font-size:13.2px;color:#2a3f80;font-family:'Liberation Mono', monospace;letter-spacing:0.747px;left:625.7px;">02</div>
<div class="t" style="top:449.39px;font-size:13.2px;color:#2a3f80;font-family:'Liberation Mono', monospace;letter-spacing:0.747px;left:651.7px;">03</div>
<div class="t" style="top:449.39px;font-size:13.2px;color:#2a3f80;font-family:'Liberation Mono', monospace;letter-spacing:0.747px;left:677.7px;">04</div>
<div class="t" style="top:449.39px;font-size:13.2px;color:#2a3f80;font-family:'Liberation Mono', monospace;letter-spacing:0.747px;left:703.7px;">05</div>
<div class="t" style="top:449.39px;font-size:13.2px;color:#2a3f80;font-family:'Liberation Mono', monospace;letter-spacing:0.747px;left:729.7px;">06</div>
<div class="t" style="top:449.39px;font-size:13.2px;color:#2a3f80;font-family:'Liberation Mono', monospace;letter-spacing:0.747px;left:755.7px;">07</div>
<div class="t" style="top:449.39px;font-size:13.2px;color:#2a3f80;font-family:'Liberation Mono', monospace;letter-spacing:0.747px;left:781.7px;">08</div>
<div class="t" style="top:449.39px;font-size:13.2px;color:#2a3f80;font-family:'Liberation Mono', monospace;letter-spacing:0.747px;left:807.7px;">09</div>
<div class="t" style="top:449.39px;font-size:13.2px;color:#2a3f80;font-family:'Liberation Mono', monospace;letter-spacing:0.747px;left:833.7px;">0A</div>
<div class="t" style="top:449.39px;font-size:13.2px;color:#2a3f80;font-family:'Liberation Mono', monospace;letter-spacing:0.747px;left:859.7px;">0B</div>
<div class="t" style="top:449.39px;font-size:13.2px;color:#2a3f80;font-family:'Liberation Mono', monospace;letter-spacing:0.747px;left:885.7px;">0C</div>
<div class="t" style="top:449.39px;font-size:13.2px;color:#2a3f80;font-family:'Liberation Mono', monospace;letter-spacing:0.747px;left:911.7px;">0D</div>
<div class="t" style="top:449.39px;font-size:13.2px;color:#2a3f80;font-family:'Liberation Mono', monospace;letter-spacing:0.747px;left:937.7px;">0E</div>
<div class="t" style="top:449.39px;font-size:13.2px;color:#2a3f80;font-family:'Liberation Mono', monospace;letter-spacing:0.747px;left:963.7px;">0F</div>
<svg class="a" style="left:1005px;top:452px;" width="8" height="9" viewBox="0 0 8 9"><path d="M7 0.5 V8.5 L0.5 4.5 Z" fill="#555"/></svg>
<div class="t" style="top:449.39px;font-size:13.2px;color:#8b8b8b;font-family:'Liberation Mono', monospace;letter-spacing:0.747px;left:1025px;">16</div>
<svg class="a" style="left:1051.5px;top:452px;" width="8" height="9" viewBox="0 0 8 9"><path d="M1 0.5 V8.5 L7.5 4.5 Z" fill="#555"/></svg>
<div class="a" style="left:465.3px;top:464.5px;width:838px;height:1px;background:#cfcfcf"></div>
<div class="a" style="left:563.4px;top:465px;width:1px;height:293px;background:#d0d0d0"></div>
<div class="a" style="left:995.2px;top:465px;width:1px;height:293px;background:#d0d0d0"></div>
<div class="a" style="left:568.1px;top:470.1px;width:25.8px;height:17.6px;background:#2a7ab8"></div>
<div class="a" style="left:1004.8px;top:470.1px;width:9.8px;height:17.6px;background:#b7d3ea"></div>
<div class="t" style="top:475.09px;font-size:13.2px;color:#4a64a8;font-family:'Liberation Mono', monospace;letter-spacing:0.747px;left:489.1px;">00000000</div>
<div class="t" style="top:472.59px;font-size:13.2px;color:#fff;font-family:'Liberation Mono', monospace;letter-spacing:0.747px;left:571.7px;">33</div>
<div class="t" style="top:472.59px;font-size:13.2px;color:#2b2622;font-family:'Liberation Mono', monospace;letter-spacing:0.747px;left:597.7px;">C0 8E D0 BC 00 7C 8E C0 8E D8 BE 00 7C BF 00</div>
<div class="t" style="top:472.59px;font-size:13.2px;color:#3d7fb8;font-family:'Liberation Mono', monospace;letter-spacing:1.85px;left:1005.4px;">3</div>
<div class="t" style="top:472.59px;font-size:13.2px;color:#2b2622;font-family:'Liberation Mono', monospace;letter-spacing:1.85px;left:1015.1999999999999px;">ŔŽĐĽ.|ŽŔŽŘľ.|ż.</div>
<div class="t" style="top:493.52px;font-size:13.2px;color:#4a64a8;font-family:'Liberation Mono', monospace;letter-spacing:0.747px;left:489.1px;">00000010</div>
<div class="t" style="top:491.02px;font-size:13.2px;color:#2b2622;font-family:'Liberation Mono', monospace;letter-spacing:0.747px;left:571.7px;">06 B9 00 02 FC F3 A4 50 68 1C 06 CB FB B9 04 00</div>
<div class="t" style="top:491.02px;font-size:13.2px;color:#2b2622;font-family:'Liberation Mono', monospace;letter-spacing:1.85px;left:1005.4px;">.ą..üó¤Ph..Ëűą..</div>
<div class="t" style="top:511.95px;font-size:13.2px;color:#4a64a8;font-family:'Liberation Mono', monospace;letter-spacing:0.747px;left:489.1px;">00000020</div>
<div class="t" style="top:509.45px;font-size:13.2px;color:#2b2622;font-family:'Liberation Mono', monospace;letter-spacing:0.747px;left:571.7px;">BD BE 07 80 7E 00 00 7C 0B 0F 85 0E 01 83 C5 10</div>
<div class="t" style="top:509.45px;font-size:13.2px;color:#2b2622;font-family:'Liberation Mono', monospace;letter-spacing:1.85px;left:1005.4px;">˝ľ.€~..|..…..?Ĺ.</div>
<div class="t" style="top:530.38px;font-size:13.2px;color:#4a64a8;font-family:'Liberation Mono', monospace;letter-spacing:0.747px;left:489.1px;">00000030</div>
<div class="t" style="top:527.88px;font-size:13.2px;color:#2b2622;font-family:'Liberation Mono', monospace;letter-spacing:0.747px;left:571.7px;">E2 F1 CD 18 88 56 00 55 C6 46 11 05 C6 46 10 00</div>
<div class="t" style="top:527.88px;font-size:13.2px;color:#2b2622;font-family:'Liberation Mono', monospace;letter-spacing:1.85px;left:1005.4px;">âńÍ.?V.UĆF..ĆF..</div>
<div class="t" style="top:548.81px;font-size:13.2px;color:#4a64a8;font-family:'Liberation Mono', monospace;letter-spacing:0.747px;left:489.1px;">00000040</div>
<div class="t" style="top:546.31px;font-size:13.2px;color:#2b2622;font-family:'Liberation Mono', monospace;letter-spacing:0.747px;left:571.7px;">B4 41 BB AA 55 CD 13 5D 72 0F 81 FB 55 AA 75 09</div>
<div class="t" style="top:546.31px;font-size:13.2px;color:#2b2622;font-family:'Liberation Mono', monospace;letter-spacing:1.85px;left:1005.4px;">´A»ŞUÍ.]r.?űUŞu.</div>
<div class="t" style="top:567.24px;font-size:13.2px;color:#4a64a8;font-family:'Liberation Mono', monospace;letter-spacing:0.747px;left:489.1px;">00000050</div>
<div class="t" style="top:564.74px;font-size:13.2px;color:#2b2622;font-family:'Liberation Mono', monospace;letter-spacing:0.747px;left:571.7px;">F7 C1 01 00 74 03 FE 46 10 66 60 80 7E 10 00 74</div>
<div class="t" style="top:564.74px;font-size:13.2px;color:#2b2622;font-family:'Liberation Mono', monospace;letter-spacing:1.85px;left:1005.4px;">÷Á..t.ţF.f`€~..t</div>
<div class="t" style="top:585.67px;font-size:13.2px;color:#4a64a8;font-family:'Liberation Mono', monospace;letter-spacing:0.747px;left:489.1px;">00000060</div>
<div class="t" style="top:583.17px;font-size:13.2px;color:#2b2622;font-family:'Liberation Mono', monospace;letter-spacing:0.747px;left:571.7px;">26 66 68 00 00 00 00 66 FF 76 08 68 00 00 68 00</div>
<div class="t" style="top:583.17px;font-size:13.2px;color:#2b2622;font-family:'Liberation Mono', monospace;letter-spacing:1.85px;left:1005.4px;">&amp;fh....f˙v.h..h.</div>
<div class="t" style="top:604.10px;font-size:13.2px;color:#4a64a8;font-family:'Liberation Mono', monospace;letter-spacing:0.747px;left:489.1px;">00000070</div>
<div class="t" style="top:601.60px;font-size:13.2px;color:#2b2622;font-family:'Liberation Mono', monospace;letter-spacing:0.747px;left:571.7px;">7C 68 01 00 68 10 00 B4 42 8A 56 00 8B F4 CD 13</div>
<div class="t" style="top:601.60px;font-size:13.2px;color:#2b2622;font-family:'Liberation Mono', monospace;letter-spacing:1.85px;left:1005.4px;">|h..h..´BŠV.‹ôÍ.</div>
<div class="t" style="top:622.53px;font-size:13.2px;color:#4a64a8;font-family:'Liberation Mono', monospace;letter-spacing:0.747px;left:489.1px;">00000080</div>
<div class="t" style="top:620.03px;font-size:13.2px;color:#2b2622;font-family:'Liberation Mono', monospace;letter-spacing:0.747px;left:571.7px;">9F 83 C4 10 9E EB 14 B8 01 02 BB 00 7C 8A 56 00</div>
<div class="t" style="top:620.03px;font-size:13.2px;color:#2b2622;font-family:'Liberation Mono', monospace;letter-spacing:1.85px;left:1005.4px;">ź?Ä.žë.¸..».|ŠV.</div>
<div class="t" style="top:640.96px;font-size:13.2px;color:#4a64a8;font-family:'Liberation Mono', monospace;letter-spacing:0.747px;left:489.1px;">00000090</div>
<div class="t" style="top:638.46px;font-size:13.2px;color:#2b2622;font-family:'Liberation Mono', monospace;letter-spacing:0.747px;left:571.7px;">8A 76 01 8A 4E 02 8A 6E 03 CD 13 66 61 73 1C FE</div>
<div class="t" style="top:638.46px;font-size:13.2px;color:#2b2622;font-family:'Liberation Mono', monospace;letter-spacing:1.85px;left:1005.4px;">Šv.ŠN.Šn.Í.fas.ţ</div>
<div class="t" style="top:659.39px;font-size:13.2px;color:#4a64a8;font-family:'Liberation Mono', monospace;letter-spacing:0.747px;left:489.1px;">000000A0</div>
<div class="t" style="top:656.89px;font-size:13.2px;color:#2b2622;font-family:'Liberation Mono', monospace;letter-spacing:0.747px;left:571.7px;">4E 11 75 0C 80 7E 00 80 0F 84 8A 00 B2 80 EB 84</div>
<div class="t" style="top:656.89px;font-size:13.2px;color:#2b2622;font-family:'Liberation Mono', monospace;letter-spacing:1.85px;left:1005.4px;">N.u.€~.€.„Š.˛€ë„</div>
<div class="t" style="top:677.82px;font-size:13.2px;color:#4a64a8;font-family:'Liberation Mono', monospace;letter-spacing:0.747px;left:489.1px;">000000B0</div>
<div class="t" style="top:675.32px;font-size:13.2px;color:#2b2622;font-family:'Liberation Mono', monospace;letter-spacing:0.747px;left:571.7px;">55 32 E4 8A 56 00 CD 13 5D EB 9E 81 3E FE 7D 55</div>
<div class="t" style="top:675.32px;font-size:13.2px;color:#2b2622;font-family:'Liberation Mono', monospace;letter-spacing:1.85px;left:1005.4px;">U2äŠV.Í.]ëž?&gt;ţ}U</div>
<div class="t" style="top:696.25px;font-size:13.2px;color:#4a64a8;font-family:'Liberation Mono', monospace;letter-spacing:0.747px;left:489.1px;">000000C0</div>
<div class="t" style="top:693.75px;font-size:13.2px;color:#2b2622;font-family:'Liberation Mono', monospace;letter-spacing:0.747px;left:571.7px;">AA 75 6E FF 76 00 E8 8D 00 75 17 FA B0 D1 E6 64</div>
<div class="t" style="top:693.75px;font-size:13.2px;color:#2b2622;font-family:'Liberation Mono', monospace;letter-spacing:1.85px;left:1005.4px;">Şun˙v.čŤ.u.ú°Ńćd</div>
<div class="t" style="top:714.68px;font-size:13.2px;color:#4a64a8;font-family:'Liberation Mono', monospace;letter-spacing:0.747px;left:489.1px;">000000D0</div>
<div class="t" style="top:712.18px;font-size:13.2px;color:#2b2622;font-family:'Liberation Mono', monospace;letter-spacing:0.747px;left:571.7px;">E8 83 00 B0 DF E6 60 E8 7C 00 B0 FF E6 64 E8 75</div>
<div class="t" style="top:712.18px;font-size:13.2px;color:#2b2622;font-family:'Liberation Mono', monospace;letter-spacing:1.85px;left:1005.4px;">č?.°ßć`č|.°˙ćdču</div>
<div class="t" style="top:733.11px;font-size:13.2px;color:#4a64a8;font-family:'Liberation Mono', monospace;letter-spacing:0.747px;left:489.1px;">000000E0</div>
<div class="t" style="top:730.61px;font-size:13.2px;color:#2b2622;font-family:'Liberation Mono', monospace;letter-spacing:0.747px;left:571.7px;">00 FB B8 00 BB CD 1A 66 23 C0 75 3B 66 81 FB 54</div>
<div class="t" style="top:730.61px;font-size:13.2px;color:#2b2622;font-family:'Liberation Mono', monospace;letter-spacing:1.85px;left:1005.4px;">.ű¸.»Í.f#Ŕu;f?űT</div>
<div class="a" style="left:1287.2px;top:465.5px;width:16px;height:292px;background:#ececee"></div>
<div class="a" style="left:1287.3px;top:467px;width:14.5px;height:13px;background:#cdcdcd"></div>
<div class="a" style="left:1303.7px;top:445px;width:1px;height:314px;background:#d6d6d6"></div>
<svg class="a" style="left:1289.2px;top:715.5px;" width="12" height="9" viewBox="0 0 12 9"><path d="M2 6.5 L6 2.5 L10 6.5" stroke="#5a5a5a" stroke-width="1.7" fill="none"/></svg>
<svg class="a" style="left:1289.2px;top:745px;" width="12" height="9" viewBox="0 0 12 9"><path d="M2 2.5 L6 6.5 L10 2.5" stroke="#5a5a5a" stroke-width="1.7" fill="none"/></svg>
<div class="a" style="left:465.3px;top:759.3px;width:839px;height:1px;background:#cfcfcf"></div>
<div class="a" style="left:470.4px;top:764.3px;width:118.0px;height:20.3px;box-sizing:border-box;border:1px solid #dadada;background:#fff"></div>
<div class="t" style="top:768.69px;font-size:11.7px;color:#8b9aa8;left:529.4px;transform:translateX(-50%);">0x00000000</div>
<div class="a" style="left:594.5px;top:764.3px;width:215.70000000000005px;height:20.3px;box-sizing:border-box;border:1px solid #dadada;background:#fff"></div>
<div class="t" style="top:768.69px;font-size:11.7px;color:#8b9aa8;left:702.35px;transform:translateX(-50%);">[n/a]</div>
<div class="a" style="left:814.6px;top:764.3px;width:118.39999999999998px;height:20.3px;box-sizing:border-box;border:1px solid #dadada;background:#fff"></div>
<div class="t" style="top:768.69px;font-size:11.7px;color:#8b9aa8;left:873.8px;transform:translateX(-50%);">0x00000000</div>
<div class="a" style="left:938px;top:764.3px;width:204.5px;height:20.3px;box-sizing:border-box;border:1px solid #dadada;background:#fff"></div>
<div class="t" style="top:768.69px;font-size:11.7px;color:#8b9aa8;left:940px;">ANSI - Central European / CP-1250</div>
<div class="a" style="left:1142.5px;top:764.3px;width:20.200000000000045px;height:20.3px;box-sizing:border-box;border:1px solid #dadada;background:#fff"></div>
<svg class="a" style="left:1148.5px;top:771.5px;" width="9" height="7" viewBox="0 0 9 7"><path d="M0.5 0.5 H8.5 L4.5 6.5 Z" fill="#555"/></svg>
<div class="a" style="left:1168.9px;top:764.3px;width:130.89999999999986px;height:20.3px;box-sizing:border-box;border:1px solid #dadada;background:#fff"></div>
</body></html>
